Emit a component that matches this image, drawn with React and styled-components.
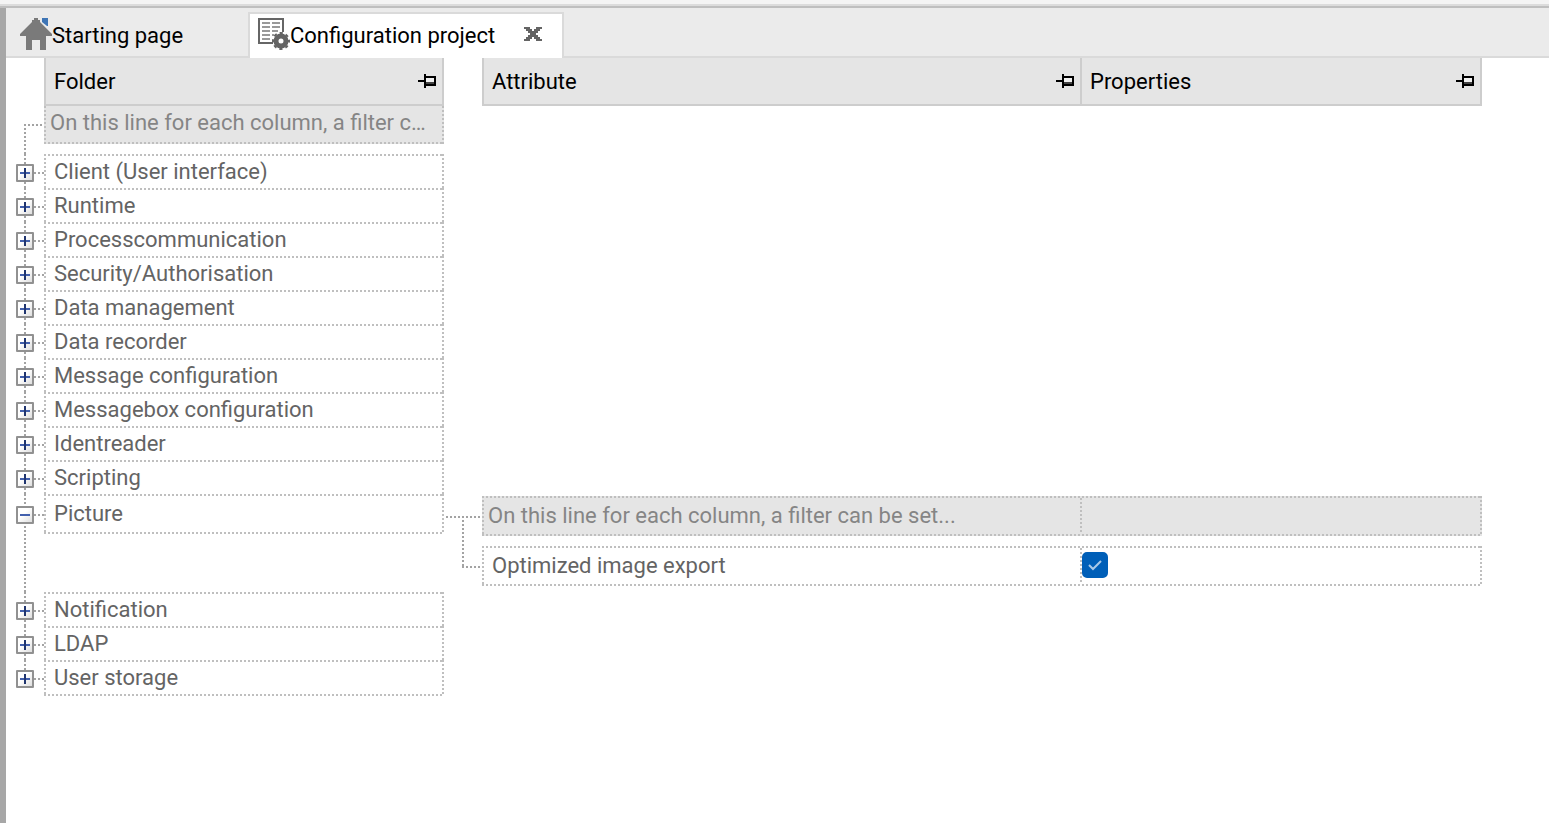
import React, {useState} from 'react';
import styled, {createGlobalStyle, css} from 'styled-components';

const colors = {
  text: '#000000',
  cell: '#646464',
  hint: '#858585',
  panel: '#e5e5e5',
  strip: '#ebebeb',
  border: '#cdcdcd',
  dots: '#bfbfbf',
  branch: '#a3a3a3',
};

const filterHint = 'On this line for each column, a filter can be set...';

const folders = [
  {name: 'Client (User interface)'},
  {name: 'Runtime'},
  {name: 'Processcommunication'},
  {name: 'Security/Authorisation'},
  {name: 'Data management'},
  {name: 'Data recorder'},
  {name: 'Message configuration'},
  {name: 'Messagebox configuration'},
  {name: 'Identreader'},
  {name: 'Scripting'},
  {name: 'Picture', attributes: [{label: 'Optimized image export', value: true}]},
  {name: 'Notification'},
  {name: 'LDAP'},
  {name: 'User storage'},
];

function HomeIcon() {
  return (
    <svg width="32" height="32" viewBox="0 0 32 32" aria-hidden="true">
      <path d="M22 0h6v8h-1l-5-4z" fill="#3f75b5" />
      <path d="M14 0h4v2h2v2l12 12v2h-6v14h-6V22h-8v10H6V18H0v-2L12 4V2h2z" fill="#7a7a7a" />
    </svg>
  );
}

function ConfigIcon() {
  return (
    <svg width="32" height="32" viewBox="0 0 32 32" aria-hidden="true">
      <path d="M15 25H1V1h24v13" fill="none" stroke="#666" strokeWidth="2" />
      <path
        d="M4 5h8M14 5h8M4 9h8M14 9h8M4 13h8M14 13h6M4 17h8M14 17h2M4 21h8"
        fill="none"
        stroke="#999"
        strokeWidth="2"
      />
      <circle cx="23" cy="23" r="5" fill="none" stroke="#646464" strokeWidth="5" />
      <circle cx="23" cy="23" r="8" fill="none" stroke="#646464" strokeWidth="2" strokeDasharray="3.2 3.083" strokeDashoffset="1.6" />
    </svg>
  );
}

function CloseIcon() {
  return (
    <svg width="18" height="14" viewBox="0 0 18 14" shapeRendering="crispEdges" aria-hidden="true">
      <path
        d="M0 0h6v2h2v2h2V2h2V0h6v2h-2v2h-2v2h-2v2h2v2h2v2h2v2h-6v-2h-2v-2H8v2H6v2H0v-2h2v-2h2V8h2V6H4V4H2V2H0z"
        fill="#646464"
      />
    </svg>
  );
}

function PinIcon() {
  return (
    <svg width="18" height="14" viewBox="0 0 18 14" shapeRendering="crispEdges" aria-hidden="true">
      <path d="M0 6h6V0h2v2h10v10H8v2H6V8H0z" />
      <path d="M8 4h8v4H8z" fill="#f0f0f0" />
      <path d="M8 8h8v2H8z" fill="#444" />
    </svg>
  );
}

function ExpandIcon({open}) {
  return (
    <svg width="10" height="10" viewBox="0 0 10 10" shapeRendering="crispEdges" aria-hidden="true">
      <path d="M0 4h10v2H0z" fill="#4260ad" />
      {!open && <path d="M4 0h2v10H4z" fill="#20356f" />}
    </svg>
  );
}

function Details({attributes}) {
  const [values, setValues] = useState(attributes.map(({value}) => value));

  const toggle = (index) => {
    setValues(values.map((value, i) => (i === index ? !value : value)));
  };

  return (
    <>
      <Connector />
      <DetailTable>
        <thead>
          <tr>
            <FilterCell>
              <FilterInput aria-label="Filter attributes" placeholder={filterHint} />
            </FilterCell>
            <FilterCell $property>
              <FilterInput aria-label="Filter properties" />
            </FilterCell>
          </tr>
        </thead>
        <tbody>
          {attributes.map(({label}, index) => (
            <tr key={label}>
              <DetailCell>
                <label htmlFor={`attribute-${index}`}>{label}</label>
              </DetailCell>
              <DetailCell $property>
                <CheckWrapper>
                  <Checkbox id={`attribute-${index}`} checked={values[index]} onChange={() => toggle(index)} />
                  <svg width="26" height="26" viewBox="0 0 26 26" aria-hidden="true">
                    <path d="M7 13l4 4 8-8" fill="none" stroke="#a9c9e8" strokeWidth="2" />
                  </svg>
                </CheckWrapper>
              </DetailCell>
            </tr>
          ))}
        </tbody>
      </DetailTable>
    </>
  );
}

function App() {
  const [opened, setOpened] = useState('Picture');

  return (
    <>
      <GlobalStyle />
      <TopEdge />
      <Frame>
        <TabStrip>
          <Tab>
            <TabButton>
              <HomeIcon />
              <TabTitle>Starting page</TabTitle>
            </TabButton>
          </Tab>
          <Tab $active>
            <TabButton>
              <ConfigIcon />
              <TabTitle>Configuration project</TabTitle>
            </TabButton>
            <IconButton aria-label="Close tab">
              <CloseIcon />
            </IconButton>
          </Tab>
        </TabStrip>
        <HeaderRow>
          <HeaderGroup>
            <HeaderCell>
              <HeaderTitle>Folder</HeaderTitle>
              <IconButton aria-label="Pin folder column">
                <PinIcon />
              </IconButton>
            </HeaderCell>
          </HeaderGroup>
          <HeaderGroup $wide>
            <HeaderCell>
              <HeaderTitle>Attribute</HeaderTitle>
              <IconButton aria-label="Pin attribute column">
                <PinIcon />
              </IconButton>
            </HeaderCell>
            <HeaderCell $property>
              <HeaderTitle>Properties</HeaderTitle>
              <IconButton aria-label="Pin properties column">
                <PinIcon />
              </IconButton>
            </HeaderCell>
          </HeaderGroup>
        </HeaderRow>
        <FilterRow>
          <FilterBranch />
          <FolderFilter>
            <FilterInput aria-label="Filter folders" placeholder={filterHint} />
          </FolderFilter>
        </FilterRow>
        <Tree>
          {folders.map(({name, attributes}, index) => {
            const open = opened === name;
            return (
              <TreeItem key={name}>
                <Gutter $last={index === folders.length - 1}>
                  <Branch $open={open}>
                    <Expander aria-label={name} aria-expanded={open} onClick={() => setOpened(open ? null : name)}>
                      <ExpandIcon open={open} />
                    </Expander>
                  </Branch>
                </Gutter>
                <FolderCell $open={open}>{name}</FolderCell>
                {open && attributes && <Details attributes={attributes} />}
              </TreeItem>
            );
          })}
        </Tree>
      </Frame>
    </>
  );
}

const GlobalStyle = createGlobalStyle`
  * {
    box-sizing: border-box;
  }

  body {
    margin: 0;
    background: #ffffff;
    color: ${colors.text};
    font-family: Roboto, 'Liberation Sans', sans-serif;
    font-size: 22px;
    line-height: 28px;
  }

  button,
  input {
    font: inherit;
    color: inherit;
    margin: 0;
    padding: 0;
    border: none;
    background: none;
  }
`;

const dotsX = (color) => `repeating-linear-gradient(to right, ${color} 0 2px, transparent 2px 4px)`;
const dotsY = (color) => `repeating-linear-gradient(to bottom, ${color} 0 2px, transparent 2px 4px)`;

const dottedBox = css`
  background-image: ${dotsX(colors.dots)}, ${dotsX(colors.dots)}, ${dotsY(colors.dots)}, ${dotsY(colors.dots)};
  background-position: left top, left bottom, left top, right top;
  background-size: 100% 2px, 100% 2px, 2px 100%, 2px 100%;
  background-repeat: no-repeat;
`;

const TopEdge = styled.div`
  height: 8px;
  background: #f4f4f4;
  border-bottom: 2px solid #bfbfbf;
  box-shadow: inset 0 -2px 0 #dcdcdc;
`;

const Frame = styled.main`
  min-height: calc(100vh - 8px);
  border-left: 6px solid #a7a7a7;
`;

const TabStrip = styled.nav`
  display: flex;
  height: 50px;
  padding-top: 4px;
  background: ${colors.strip};
  box-shadow: inset 0 -2px 0 #dadada;
`;

const Tab = styled.div`
  display: flex;
  align-items: center;
  gap: 29px;
  padding: 0 20px 2px 14px;
  width: 242px;

  ${({$active}) =>
    $active &&
    css`
      width: auto;
      padding-left: 8px;
      padding-bottom: 4px;
      background: #ffffff;
      border: 2px solid #dadada;
      border-bottom: none;
    `}
`;

const TabButton = styled.button`
  display: flex;
  align-items: center;
  white-space: nowrap;
`;

const TabTitle = styled.span`
  padding-top: 4px;
`;

const IconButton = styled.button`
  display: flex;
`;

const HeaderRow = styled.div`
  display: flex;
  gap: 38px;
  padding: 0 67px 0 38px;
`;

const HeaderGroup = styled.div`
  display: flex;
  flex: none;
  width: 400px;
  border-right: 2px solid ${colors.border};

  ${({$wide}) =>
    $wide &&
    css`
      flex: 1;
    `}
`;

const HeaderCell = styled.div`
  display: flex;
  flex: 1;
  align-items: center;
  justify-content: space-between;
  height: 48px;
  padding: 0 6px 0 8px;
  background: ${colors.panel};
  border: solid ${colors.border};
  border-width: 0 0 2px 2px;

  ${({$property}) =>
    $property &&
    css`
      flex: none;
      width: 400px;
    `}
`;

const HeaderTitle = styled.span`
  padding-top: 2px;
`;

const FilterRow = styled.div`
  display: flex;
`;

const FilterBranch = styled.div`
  width: 20px;
  height: 30px;
  margin: 18px 0 0 18px;
  background-image: ${dotsX(colors.branch)}, ${dotsY(colors.branch)};
  background-size: 100% 2px, 2px 100%;
  background-repeat: no-repeat;
`;

const FolderFilter = styled.div`
  display: flex;
  width: 400px;
  height: 38px;
  padding: 0 8px 4px 6px;
  background-color: ${colors.panel};
  ${dottedBox}
  background-size: 0 0, 100% 2px, 2px 100%, 2px 100%;
`;

const FilterInput = styled.input`
  display: block;
  width: 100%;
  text-overflow: ellipsis;

  &::placeholder {
    color: ${colors.hint};
    opacity: 1;
  }
`;

const Tree = styled.ul`
  margin: 0;
  padding: 0;
  list-style: none;
`;

const TreeItem = styled.li`
  display: flex;
  align-items: flex-start;
  margin-bottom: -2px;
`;

const Gutter = styled.div`
  flex: none;
  align-self: stretch;
  width: 38px;
  background: ${dotsY(colors.branch)} 18px 0 no-repeat;
  background-size: 2px ${({$last}) => ($last ? '20px' : '100%')};
`;

const Branch = styled.div`
  display: flex;
  align-items: center;
  height: ${({$open}) => ($open ? 40 : 36)}px;
  padding: 2px 0 0 10px;

  &::after {
    content: '';
    flex: 1;
    height: 2px;
    background: ${dotsX(colors.branch)};
  }
`;

const Expander = styled.button`
  display: flex;
  align-items: center;
  justify-content: center;
  width: 18px;
  height: 18px;
  border: 2px solid #919191;
  border-radius: 1px;
  background: linear-gradient(135deg, #ffffff 40%, #dedede);
`;

const FolderCell = styled.div`
  display: flex;
  flex: none;
  align-items: center;
  width: 400px;
  height: ${({$open}) => ($open ? 40 : 36)}px;
  padding: 0 10px;
  color: ${colors.cell};
  ${dottedBox}
`;

const Connector = styled.div`
  flex: none;
  align-self: stretch;
  width: 38px;
  background-image: ${dotsX(colors.branch)}, ${dotsX(colors.branch)}, ${dotsY(colors.branch)};
  background-position: 2px 22px, 18px 72px, 18px 22px;
  background-size: 34px 2px, 18px 2px, 2px 52px;
  background-repeat: no-repeat;
`;

const DetailTable = styled.table`
  flex: 1;
  margin: 2px 67px 8px 0;
  border-collapse: collapse;
  table-layout: fixed;

  tr {
    ${dottedBox}
  }

  thead tr {
    background-color: ${colors.panel};
  }

  /* spacing between the filter line and the first attribute */
  tbody::before {
    content: '';
    display: block;
    height: 10px;
  }
`;

const DetailCell = styled.td`
  height: 40px;
  padding: 0 10px;
  color: ${colors.cell};

  ${({$property}) =>
    $property &&
    css`
      width: 402px;
      padding: 0 2px 2px;
      background: ${dotsY(colors.dots)} left center no-repeat;
      background-size: 2px 36px;
    `}
`;

const FilterCell = styled(DetailCell).attrs({as: 'th', scope: 'col'})`
  padding: 0 6px;
  font-weight: 400;
`;

const CheckWrapper = styled.span`
  display: grid;
  width: 26px;

  > * {
    grid-area: 1 / 1;
    pointer-events: none;
  }

  > input {
    pointer-events: auto;
  }
`;

const Checkbox = styled.input.attrs({type: 'checkbox'})`
  appearance: none;
  width: 26px;
  height: 26px;
  border: 2px solid #005fb8;
  border-radius: 5px;

  &:checked {
    background: #005fb8;
  }
`;

export default App;
